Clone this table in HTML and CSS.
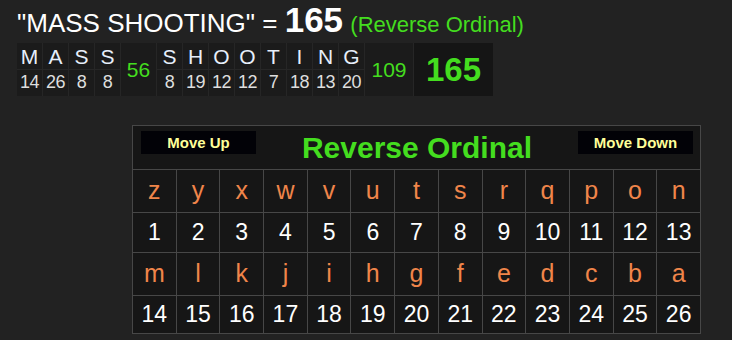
FILE: index.html
```html
<!DOCTYPE html>
<html>
<head>
<meta charset="utf-8">
<link rel="stylesheet" href="styles.css">
</head>
<body>
<div class="title">"MASS SHOOTING" = <b class="total">165</b> <span class="cipher">(Reverse Ordinal)</span></div>

<div class="breakdown">
  <div class="col"><div class="ltr">M</div><div class="num">14</div></div>
  <div class="col"><div class="ltr">A</div><div class="num">26</div></div>
  <div class="col"><div class="ltr">S</div><div class="num">8</div></div>
  <div class="col"><div class="ltr">S</div><div class="num">8</div></div>
  <div class="wsum w56">56</div>
  <div class="col"><div class="ltr">S</div><div class="num">8</div></div>
  <div class="col"><div class="ltr">H</div><div class="num">19</div></div>
  <div class="col"><div class="ltr">O</div><div class="num">12</div></div>
  <div class="col"><div class="ltr">O</div><div class="num">12</div></div>
  <div class="col"><div class="ltr">T</div><div class="num">7</div></div>
  <div class="col"><div class="ltr">I</div><div class="num">18</div></div>
  <div class="col"><div class="ltr">N</div><div class="num">13</div></div>
  <div class="col"><div class="ltr">G</div><div class="num">20</div></div>
  <div class="wsum w109">109</div>
  <div class="grand">165</div>
</div>

<div class="chart">
  <div class="head">
    <button class="btn">Move Up</button>
    <div class="head-title">Reverse Ordinal</div>
    <button class="btn">Move Down</button>
  </div>
  <div class="c l">z</div><div class="c l">y</div><div class="c l">x</div><div class="c l">w</div><div class="c l">v</div><div class="c l">u</div><div class="c l">t</div><div class="c l">s</div><div class="c l">r</div><div class="c l">q</div><div class="c l">p</div><div class="c l">o</div><div class="c l">n</div>
  <div class="c n">1</div><div class="c n">2</div><div class="c n">3</div><div class="c n">4</div><div class="c n">5</div><div class="c n">6</div><div class="c n">7</div><div class="c n">8</div><div class="c n">9</div><div class="c n">10</div><div class="c n">11</div><div class="c n">12</div><div class="c n">13</div>
  <div class="c l">m</div><div class="c l">l</div><div class="c l">k</div><div class="c l">j</div><div class="c l">i</div><div class="c l">h</div><div class="c l">g</div><div class="c l">f</div><div class="c l">e</div><div class="c l">d</div><div class="c l">c</div><div class="c l">b</div><div class="c l">a</div>
  <div class="c n">14</div><div class="c n">15</div><div class="c n">16</div><div class="c n">17</div><div class="c n">18</div><div class="c n">19</div><div class="c n">20</div><div class="c n">21</div><div class="c n">22</div><div class="c n">23</div><div class="c n">24</div><div class="c n">25</div><div class="c n">26</div>
</div>
</body>
</html>
```

FILE: styles.css
```css
html, body {
  margin: 0;
  padding: 0;
  background: #222222;
  font-family: "Liberation Sans", Arial, sans-serif;
}

.title {
  padding: 3px 0 0 17px;
  height: 40px;
  line-height: 34px;
  font-size: 26px;
  color: #ffffff;
  white-space: nowrap;
}

.total {
  font-size: 35px;
  font-weight: bold;
  line-height: 34px;
}

.cipher {
  font-size: 22px;
  color: #44dd1f;
}

.breakdown {
  margin-left: 17px;
  display: inline-flex;
  background: #1b1b1b;
  height: 53px;
}

.col {
  display: flex;
  flex-direction: column;
  width: 25px;
  border-right: 1px solid #262626;
}

.ltr {
  height: 26px;
  border-bottom: 1px solid #262626;
  font-size: 21px;
  line-height: 28px;
  text-align: center;
  color: #e6eefa;
}

.num {
  height: 26px;
  font-size: 18px;
  line-height: 24px;
  text-align: center;
  color: #dedede;
  letter-spacing: -0.5px;
}

.wsum {
  display: flex;
  align-items: center;
  justify-content: center;
  font-size: 21px;
  color: #44dd1f;
  border-right: 1px solid #262626;
}

.w56 {
  width: 35px;
}

.w109 {
  width: 48px;
}

.grand {
  width: 79px;
  display: flex;
  align-items: center;
  justify-content: center;
  font-size: 33px;
  font-weight: bold;
  color: #44dd1f;
  background: #151515;
}

.chart {
  margin: 29px 0 0 132px;
  width: 569px;
  display: grid;
  grid-template-columns: repeat(13, 1fr);
  grid-template-rows: 43px 42px 39px 42px 37px;
  gap: 1px;
  padding: 1px;
  box-sizing: border-box;
  background: #474747;
}

.head {
  grid-column: 1 / -1;
  background: #161616;
  display: flex;
  align-items: flex-start;
  justify-content: space-between;
  padding: 5px 7px 0 8px;
}

.btn {
  width: 115px;
  height: 23px;
  padding: 0;
  border: none;
  background: #020207;
  color: #ffff99;
  font-family: "Liberation Sans", Arial, sans-serif;
  font-weight: bold;
  font-size: 15px;
}

.head-title {
  font-size: 30px;
  font-weight: bold;
  color: #44dd1f;
  line-height: 34px;
}

.c {
  background: #161616;
  display: flex;
  align-items: center;
  justify-content: center;
}

.l {
  color: #f0854a;
  font-size: 25px;
  padding-bottom: 2px;
}

.n {
  color: #ffffff;
  font-size: 23px;
}
```
